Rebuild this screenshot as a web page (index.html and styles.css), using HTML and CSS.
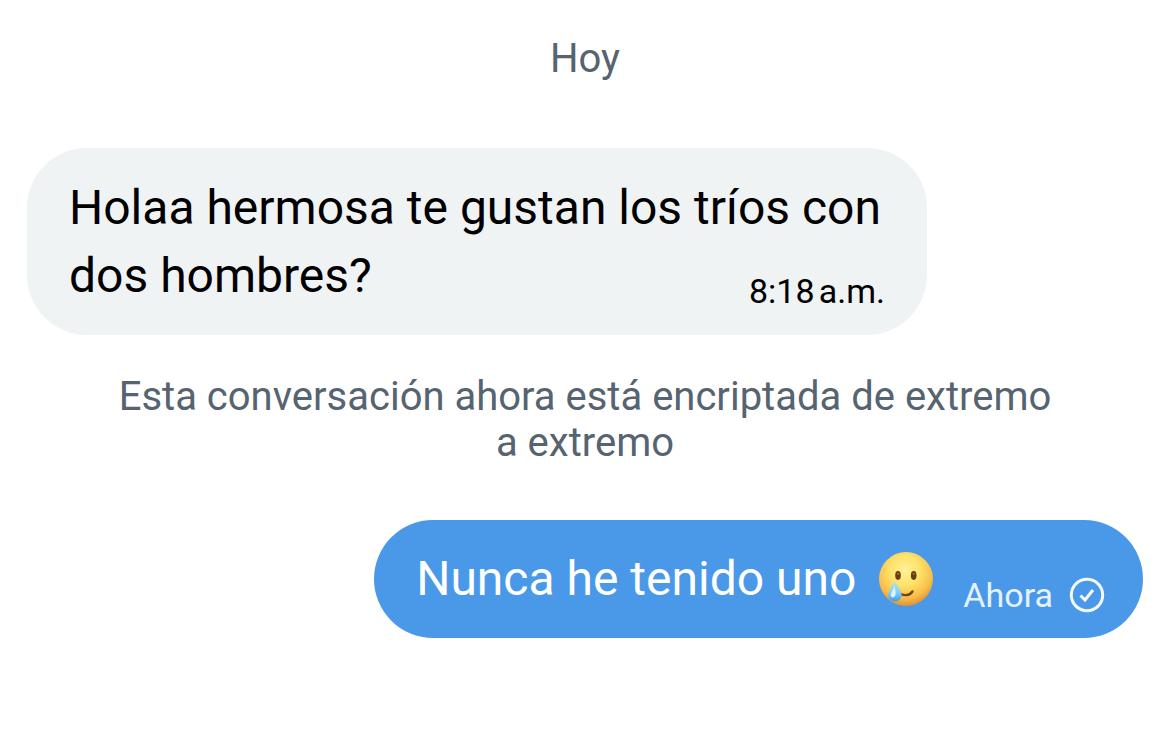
FILE: index.html
```html
<!DOCTYPE html>
<html lang="es">
<head>
  <meta charset="UTF-8" />
  <meta name="viewport" content="width=device-width, initial-scale=1" />
  <title>Conversación</title>
  <link rel="stylesheet" href="styles.css">
</head>
<body>
  <main class="chat">
    <p class="date">Hoy</p>

    <!-- Mensaje recibido -->
    <div class="message received">
      <p class="text">Holaa hermosa te gustan los tríos con dos hombres? <time class="time">8:18&#8239;a.m.</time></p>
    </div>

    <p class="notice">Esta conversación ahora está encriptada de extremo a extremo</p>

    <!-- Mensaje enviado -->
    <div class="message sent">
      <p class="text">Nunca he tenido uno</p>
      <svg class="emoji" viewBox="0 0 54 54" role="img" aria-label="Cara sonriente con lágrima">
        <defs>
          <radialGradient id="face" cx="48%" cy="34%" r="68%">
            <stop offset="0" stop-color="#fff295" />
            <stop offset="0.4" stop-color="#fde36c" />
            <stop offset="0.75" stop-color="#f8bf4a" />
            <stop offset="1" stop-color="#dd8c30" />
          </radialGradient>
          <linearGradient id="tear" x1="0" y1="0" x2="0" y2="1">
            <stop offset="0" stop-color="#b5e4f7" />
            <stop offset="0.6" stop-color="#7fcdf6" />
            <stop offset="1" stop-color="#3c9fe4" />
          </linearGradient>
        </defs>
        <circle cx="27" cy="27" r="27" fill="url(#face)" />
        <ellipse cx="19" cy="23.500" rx="2.800" ry="4.400" fill="#6b3e12" />
        <ellipse cx="34.700" cy="23.500" rx="2.800" ry="4.400" fill="#6b3e12" />
        <circle cx="19" cy="21.800" r="1" fill="#a8763a" />
        <circle cx="34.700" cy="21.800" r="1" fill="#a8763a" />
        <path d="M20 41 C25 44.500 31 43.500 33.500 39.500" fill="none" stroke="#79410f" stroke-width="2.400" stroke-linecap="round" />
        <path d="M16 28.500 C14 34 9 38 9 43 C9 47 12.300 49.300 15.800 49.300 C19.500 49.300 22.700 47 22.700 43 C22.700 38 17.500 34.500 16 28.500 Z" fill="url(#tear)" />
        <path d="M15.500 34 C14 38 11.800 40.500 11.800 43.500 C12.300 46 15 46 16.300 43.500 C17.200 41 16.300 38 15.500 34 Z" fill="#d9f3ff" />
      </svg>
      <div class="status">
        <time class="time">Ahora</time>
        <svg class="check" viewBox="0 0 36 36" role="img" aria-label="Enviado">
          <circle cx="18" cy="18" r="15.700" />
          <path d="M11.500 18.500 L16 23 L24 13" />
        </svg>
      </div>
    </div>
  </main>
</body>
</html>
```
FILE: styles.css
```css
* {
  box-sizing: border-box;
}
body {
  margin: 0;
  background-color: #fff;
  color: #000;
  font-family: Roboto, "Liberation Sans", sans-serif;
}
p {
  margin: 0;
}
.chat {
  display: flex;
  flex-direction: column;
  padding: 36px 27px;
}
/* Fecha y aviso centrados */
.date,
.notice {
  color: #566370;
  font-size: 40px;
  line-height: 46px;
  text-align: center;
}
.date {
  margin-bottom: 66px;
}
.notice {
  max-width: 950px;
  margin: 39px auto 54px;
}
/* Burbujas */
.message {
  max-width: 900px;
  padding: 25px 42px;
  border-radius: 60px;
  font-size: 48px;
  line-height: 68px;
}
.time {
  font-size: 34px;
  line-height: 36px;
}
.received {
  display: flow-root;
  align-self: flex-start;
  padding-top: 26px;
  background-color: #eff3f4;
}
/* La hora queda a la derecha de la última línea */
.received .time {
  float: right;
  margin-top: 31px;
}
.sent {
  display: flex;
  align-items: center;
  align-self: flex-end;
  padding-right: 38px;
  background-color: #4a99e9;
  color: #fff;
}
.emoji {
  width: 54px;
  height: 54px;
  margin: 0 30px 0 23px;
}
.status {
  display: flex;
  align-items: center;
  align-self: flex-end;
  gap: 16px;
  color: #e6f2fd;
}
.check {
  width: 36px;
  height: 36px;
  fill: none;
  stroke: #f3f9ff;
  stroke-width: 3px;
}
```
